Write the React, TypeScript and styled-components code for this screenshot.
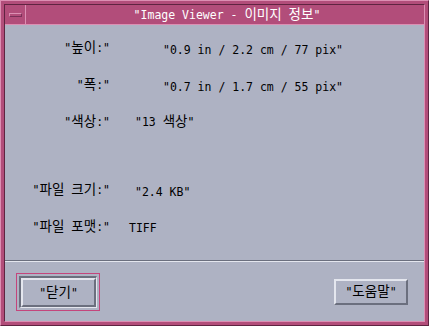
import styled, { createGlobalStyle } from 'styled-components';

const GlobalStyle = createGlobalStyle`
  html, body {
    margin: 0;
    padding: 0;
    background: #aeb2c3;
  }
  body {
    font-family: 'DejaVu Sans Mono', 'Noto Sans CJK KR', monospace;
    font-size: 11.5px;
    color: #000;
  }
`;

// Hangul runs are set a little larger, like the bitmap Korean font in the original
const Text = ({ children }: { children: string }) => (
  <span>
    {children.split(/([\uac00-\ud7a3]+)/).map((part, i) =>
      i % 2 ? <Hangul key={i}>{part}</Hangul> : part,
    )}
  </span>
);

const rows = [
  { label: '"높이:"', value: '"0.9 in / 2.2 cm / 77 pix"', indent: 53, drop: 2 },
  { label: '"폭:"', value: '"0.7 in / 1.7 cm / 55 pix"', indent: 53, drop: 2 },
  { label: '"색상:"', value: '"13 색상"', indent: 25, drop: 0 },
  null,
  { label: '"파일 크기:"', value: '"2.4 KB"', indent: 25, drop: 2 },
  { label: '"파일 포맷:"', value: 'TIFF', indent: 19, drop: 1 },
];

export default function App() {
  return (
    <>
      <GlobalStyle />
      <Window>
        <Inner>
          <TitleBar>
            <MenuButton>
              <MenuBar />
            </MenuButton>
            <Title>
              <Text>"Image Viewer - 이미지 정보"</Text>
            </Title>
          </TitleBar>
          <Content>
            <Form>
              {rows.map((row, i) =>
                row ? (
                  <Row key={i}>
                    <Label>
                      <Text>{row.label}</Text>
                    </Label>
                    <Value $indent={row.indent} $drop={row.drop}>
                      <Text>{row.value}</Text>
                    </Value>
                  </Row>
                ) : (
                  <Spacer key={i} />
                ),
              )}
            </Form>
            <Separator />
            <ButtonBar>
              <FocusRing>
                <DefaultShadow>
                  <Button $width={75} $height={29}>
                    <Text>"닫기"</Text>
                  </Button>
                </DefaultShadow>
              </FocusRing>
              <Button $width={74} $height={26}>
                <Text>"도움말"</Text>
              </Button>
            </ButtonBar>
          </Content>
        </Inner>
      </Window>
    </>
  );
}

const Hangul = styled.span`
  font-family: 'Noto Sans CJK KR', sans-serif;
  font-size: 13.5px;
  line-height: 1;
`;

const Window = styled.div`
  width: 429px;
  height: 326px;
  box-sizing: border-box;
  display: flex;
  padding: 3px;
  background: #b24d7a;
  border-top: 1px solid #dc8fb3;
  border-left: 1px solid #dc8fb3;
  border-right: 1px solid #5f2441;
  border-bottom: 1px solid #5f2441;
`;

const Inner = styled.div`
  flex: 1;
  display: flex;
  flex-direction: column;
  border-top: 1px solid #5f2441;
  border-left: 1px solid #5f2441;
  border-right: 1px solid #dc8fb3;
  border-bottom: 1px solid #dc8fb3;
`;

const TitleBar = styled.div`
  height: 19px;
  display: flex;
  background: #b24d7a;
  border-bottom: 1px solid #dc8fb3;
`;

const MenuButton = styled.div`
  width: 20px;
  display: flex;
  align-items: center;
  justify-content: center;
  border-right: 1px solid #dc8fb3;
`;

const MenuBar = styled.div`
  width: 11px;
  height: 2px;
  margin-top: 1px;
  background: #b24d7a;
  border-top: 1px solid #dc8fb3;
  border-left: 1px solid #dc8fb3;
  border-right: 1px solid #7a3058;
  border-bottom: 1px solid #7a3058;
`;

const Title = styled.div`
  flex: 1;
  display: flex;
  align-items: center;
  justify-content: center;
  color: #fff;
  white-space: pre;
  padding-left: 4px;
`;

const Content = styled.div`
  flex: 1;
  display: flex;
  flex-direction: column;
  background: #aeb2c3;
`;

const Form = styled.div`
  display: flex;
  flex-direction: column;
  padding-top: 4px;
  height: 231px;
`;

const Row = styled.div`
  height: 37px;
  display: flex;
  align-items: center;
  white-space: pre;
`;

const Spacer = styled.div`
  height: 31px;
`;

const Label = styled.div`
  width: 105px;
  text-align: right;
`;

const Value = styled.div<{ $indent: number; $drop: number }>`
  margin-left: ${(p) => p.$indent}px;
  padding-top: ${(p) => p.$drop * 2}px;
`;

const Separator = styled.div`
  border-top: 1px solid #6b6f7e;
  border-bottom: 1px solid #e4e6ee;
`;

const ButtonBar = styled.div`
  flex: 1;
  display: flex;
  align-items: center;
  justify-content: space-between;
  padding: 0 16px 0 11px;
`;

const FocusRing = styled.div`
  border: 1px solid #c4457c;
  padding: 2px;
  display: flex;
`;

const DefaultShadow = styled.div`
  display: flex;
  border-top: 2px solid #6b6f7e;
  border-left: 2px solid #6b6f7e;
  border-right: 1px solid #e4e6ee;
  border-bottom: 1px solid #e4e6ee;
`;

const Button = styled.div<{ $width: number; $height: number }>`
  box-sizing: border-box;
  width: ${(p) => p.$width}px;
  height: ${(p) => p.$height}px;
  display: flex;
  align-items: center;
  justify-content: center;
  white-space: pre;
  background: #aeb2c3;
  border-top: 2px solid #e4e6ee;
  border-left: 2px solid #e4e6ee;
  border-right: 2px solid #6b6f7e;
  border-bottom: 2px solid #6b6f7e;
`;
